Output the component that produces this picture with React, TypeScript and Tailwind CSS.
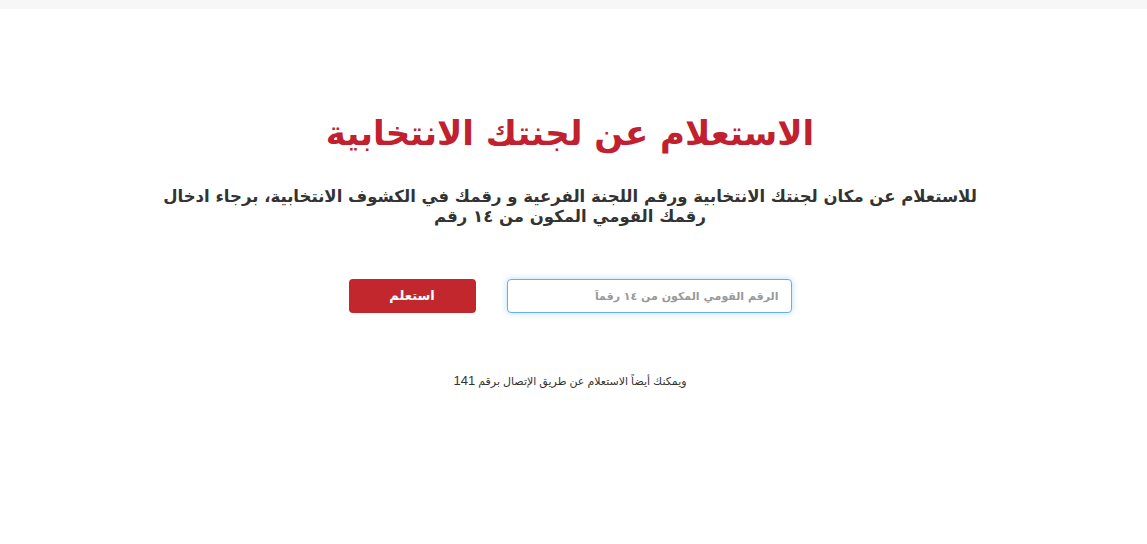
export default function App() {
  return (
    <div dir="rtl" className="min-h-[544px] w-full bg-white" style={{ fontFamily: '"DejaVu Sans", "Liberation Sans", sans-serif' }}>
      <div className="h-[9px] w-full bg-[#f7f7f7]" />
      <div className="flex flex-col items-center pr-[7px]">
        <h1 className="mt-[100px] text-[34px] font-bold leading-[48px] text-[#c1202e]">
          الاستعلام عن لجنتك الانتخابية
        </h1>
        <p className="mt-[30px] w-[850px] text-center text-[16.5px] font-bold leading-[20px] text-[#333]">
          للاستعلام عن مكان لجنتك الانتخابية ورقم اللجنة الفرعية و رقمك في الكشوف الانتخابية، برجاء ادخال رقمك القومي المكون من ١٤ رقم
        </p>
        <div className="mt-[52px] flex items-center gap-[31px]">
          <input
            type="text"
            placeholder="الرقم القومي المكون من ١٤ رقماً"
            className="h-[34px] w-[285px] rounded-[4px] border border-[#66afe9] bg-white px-3 text-[11px] font-bold text-[#555] shadow-[0_0_6px_rgba(102,175,233,0.45)] outline-none placeholder:text-[#999]"
          />
          <button className="h-[34px] w-[127px] rounded-[4px] bg-[#c1272d] text-[13px] font-bold text-white">
            استعلم
          </button>
        </div>
        <p className="mt-[58px] text-[11px] text-[#333]" style={{ fontFamily: '"Liberation Sans", "DejaVu Sans", sans-serif' }}>
          ويمكنك أيضاً الاستعلام عن طريق الإتصال برقم <span className="text-[13px]">141</span>
        </p>
      </div>
    </div>
  );
}
